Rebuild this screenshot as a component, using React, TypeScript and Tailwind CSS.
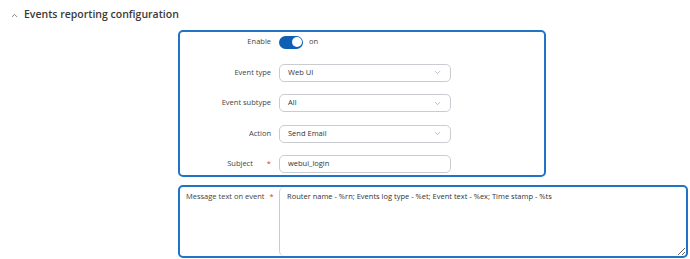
import { ChevronDown, ChevronUp } from "lucide-react";

const font = { fontFamily: '"Open Sans", "Liberation Sans", sans-serif' };

const Select = ({ value }: { value: string }) => (
  <div className="flex h-[18px] w-[172px] items-center justify-between rounded-[5px] border border-[#c9cdd2] bg-white pl-[8px] pr-[8px] text-[7.5px] text-[#333]">
    <span>{value}</span>
    <ChevronDown className="h-[9px] w-[9px] text-[#8a8f95]" strokeWidth={1.5} />
  </div>
);

const Row = ({ label, required, children }: { label: string; required?: boolean; children: React.ReactNode }) => (
  <div className="flex h-[18px] items-center">
    <div className="flex w-[99px] shrink-0 justify-end pr-[8px] text-[7.5px] text-[#444]">
      <span>{label}</span>
      {required && <span className="ml-[14px] text-[#e0362f]">*</span>}
    </div>
    {children}
  </div>
);

export default function App() {
  return (
    <div className="h-[259px] w-[690px] overflow-hidden bg-white" style={font}>
      <div className="flex h-[30px] items-center pl-[10px] text-[10.5px] font-semibold text-[#3a3a3a]">
        <ChevronUp className="mr-[5px] h-[9px] w-[9px] text-[#555]" strokeWidth={2} />
        <span>Events reporting configuration</span>
      </div>

      <div className="flex flex-col gap-[8px] pl-[178px]">
        <div className="flex w-[368px] flex-col gap-[12.5px] rounded-[5px] border-2 border-[#1f74c4] pb-[2px] pt-[1px]">
          <Row label="Enable">
            <div className="flex items-center">
              <div className="flex h-[13px] w-[24px] items-center justify-end rounded-full bg-[#0c5fb3] pr-[1.5px]">
                <div className="h-[10px] w-[10px] rounded-full bg-white" />
              </div>
              <span className="ml-[6px] text-[7.5px] text-[#444]">on</span>
            </div>
          </Row>
          <Row label="Event type">
            <Select value="Web UI" />
          </Row>
          <Row label="Event subtype">
            <Select value="All" />
          </Row>
          <Row label="Action">
            <Select value="Send Email" />
          </Row>
          <Row label="Subject" required>
            <div className="flex h-[18px] w-[172px] items-center rounded-[5px] border border-[#c9cdd2] bg-white pl-[8px] text-[7.5px] text-[#333]">
              webui_login
            </div>
          </Row>
        </div>

        <div className="flex h-[73px] w-[510px] rounded-[5px] border-2 border-[#1f74c4]">
          <div className="w-[99px] shrink-0 whitespace-nowrap pl-[6px] pt-[4px] text-[7.5px] text-[#444]">
            Message text on event <span className="ml-[3px] text-[#e0362f]">*</span>
          </div>
          <textarea
            className="h-full flex-1 resize rounded-[5px] border-l border-[#c9cdd2] px-[7px] pt-[4px] text-[7.5px] text-[#333] outline-none"
            style={font}
            defaultValue="Router name - %rn; Events log type - %et; Event text - %ex; Time stamp - %ts"
          />
        </div>
      </div>
    </div>
  );
}
